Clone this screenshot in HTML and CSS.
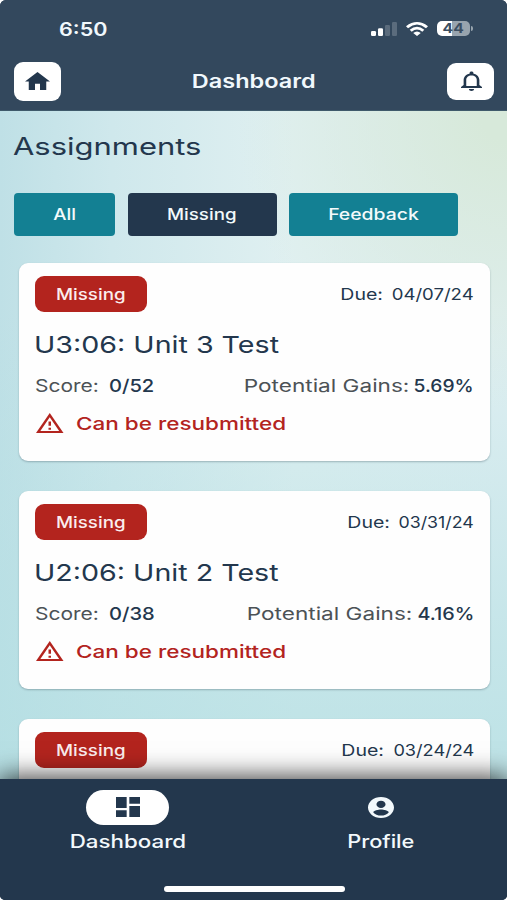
FILE: index.html
```
<!DOCTYPE html>
<html lang="en">
<head>
<meta charset="utf-8">
<meta name="viewport" content="width=device-width, initial-scale=1">
<title>Dashboard</title>
<link rel="stylesheet" href="styles.css">
</head>
<body>
<div class="screen">
  <header class="header">
    <div class="status">
      <span class="t clock">6:50</span>
      <div class="status-icons">
        <svg class="signal" viewBox="0 0 26 14" preserveAspectRatio="none"><rect x="0" y="9" width="5" height="5" rx="1.3"/><rect x="7" y="6.300" width="5" height="7.700" rx="1.300"/><g opacity=".2"><rect x="14" y="3" width="5" height="11" rx="1.300"/><rect x="21" y="0" width="5" height="14" rx="1.300"/></g></svg>
        <svg class="wifi" viewBox="0 0 22 14" preserveAspectRatio="none"><path d="M0 4.200Q11-4.200 22 4.200L20 6.200Q11-1 2 6.200ZM3.700 7.800Q11 1.800 18.300 7.800L16.300 9.800Q11 5.400 5.700 9.800ZM7.200 11.100Q11 8 14.800 11.100L11 14Z"/></svg>
        <div class="battery"><span class="t pct">44</span></div>
      </div>
    </div>
    <div class="titlebar">
      <button class="icon-btn home" aria-label="Home"><svg viewBox="2 3 20 17" preserveAspectRatio="none"><path d="M10 20v-6h4v6h5v-8h3L12 3 2 12h3v8z"/></svg></button>
      <h1 class="t title">Dashboard</h1>
      <button class="icon-btn bell" aria-label="Notifications"><svg viewBox="4 2 16 20" preserveAspectRatio="none"><path d="M12 22c1.100 0 2-.9 2-2h-4c0 1.100.9 2 2 2zm6-6v-5c0-3.070-1.630-5.640-4.500-6.320V4c0-.83-.67-1.500-1.500-1.500s-1.500.67-1.500 1.500v.68C7.640 5.360 6 7.920 6 11v5l-2 2v1h16v-1l-2-2zm-2 1H8v-6c0-2.480 1.510-4.500 4-4.500s4 2.020 4 4.500v6z"/></svg></button>
    </div>
  </header>
  <main class="content">
    <h2 class="heading"><span class="t">Assignments</span></h2>
    <div class="filters">
      <button class="filter all"><span class="t k16">All</span></button>
      <button class="filter missing"><span class="t k16">Missing</span></button>
      <button class="filter feedback"><span class="t k20">Feedback</span></button>
    </div>
    <section class="cards">
      <article class="card">
        <div class="row top"><span class="badge"><span class="t k16">Missing</span></span><div class="due"><span class="t label">Due:</span><span class="t date d1">04/07/24</span></div></div>
        <h3 class="name"><span class="t">U3:06: Unit 3 Test</span></h3>
        <div class="row stats"><div class="score"><span class="t label">Score:</span><span class="t value">0/52</span></div><div class="gains"><span class="t label">Potential Gains:</span><span class="t value g1">5.69%</span></div></div>
        <div class="warn"><svg viewBox="1 2 22 19" preserveAspectRatio="none"><path d="M12 5.990 19.530 19H4.470L12 5.990M12 2 1 21h22L12 2zm1 14h-2v2h2v-2zm0-6h-2v4h2v-4z"/></svg><span class="t">Can be resubmitted</span></div>
      </article>
      <article class="card">
        <div class="row top"><span class="badge"><span class="t k16">Missing</span></span><div class="due"><span class="t label">Due:</span><span class="t date d2">03/31/24</span></div></div>
        <h3 class="name"><span class="t">U2:06: Unit 2 Test</span></h3>
        <div class="row stats"><div class="score"><span class="t label">Score:</span><span class="t value">0/38</span></div><div class="gains"><span class="t label">Potential Gains:</span><span class="t value g2">4.16%</span></div></div>
        <div class="warn"><svg viewBox="1 2 22 19" preserveAspectRatio="none"><path d="M12 5.990 19.530 19H4.470L12 5.990M12 2 1 21h22L12 2zm1 14h-2v2h2v-2zm0-6h-2v4h2v-4z"/></svg><span class="t">Can be resubmitted</span></div>
      </article>
      <article class="card">
        <div class="row top"><span class="badge"><span class="t k16">Missing</span></span><div class="due"><span class="t label">Due:</span><span class="t date d3">03/24/24</span></div></div>
      </article>
    </section>
  </main>
  <nav class="tabs">
    <div class="tab-row">
      <a class="tab active"><span class="pill"><svg class="grid-icon" viewBox="3 3 18 18" preserveAspectRatio="none"><path d="M3 13h8V3H3v10zm0 8h8v-6H3v6zm10 0h8V11h-8v10zm0-18v6h8V3h-8z"/></svg></span><span class="t tab-label">Dashboard</span></a>
      <a class="tab profile"><span class="pill"><svg class="user-icon" viewBox="2 2 20 20" preserveAspectRatio="none"><path d="M12 2C6.480 2 2 6.480 2 12s4.480 10 10 10 10-4.480 10-10S17.520 2 12 2zm0 3.500c1.930 0 3.500 1.570 3.500 3.500S13.930 12.500 12 12.500 8.500 10.930 8.500 9 10.070 5.500 12 5.500zm0 14.200c-2.500 0-4.710-1.280-6-3.220.03-1.600 4-2.680 6-2.680s5.970 1.080 6 2.680c-1.290 1.940-3.500 3.220-6 3.220z"/></svg></span><span class="t tab-label">Profile</span></a>
    </div>
    <div class="home-bar"></div>
  </nav>
</div>
</body>
</html>
```
FILE: styles.css
```
* { box-sizing: border-box; }
body { margin: 0; background: #fff; font-family: Inter, "Liberation Sans", sans-serif; font-weight: 500; color: #23374d; }
h1, h2, h3 { margin: 0; font-weight: 500; }
button { border: 0; padding: 0; font: inherit; color: inherit; }
svg { display: block; fill: currentColor; }

/* Wide lettering: each label is stretched horizontally by --k */
.t { display: inline-block; white-space: nowrap; transform: scaleX(var(--k, 1)); }
.k16 { --k: 1.17; }
.k20 { --k: 1.21; }

.screen { width: 507px; height: 900px; display: flex; flex-direction: column; overflow: hidden; border-radius: 6px 6px 5px 5px; background: #23374d; }

.header { height: 111px; flex: none; background: #33485d; border-bottom: 1px solid #3f5a6b; color: #fff; }
.status { height: 57px; padding: 0 34px 0 59px; display: flex; align-items: center; justify-content: space-between; }
.clock { font-size: 18.5px; font-weight: 600; --k: 1.165; transform-origin: left; color: #f1f8fc; }
.status-icons { display: flex; align-items: center; gap: 9px; }
.signal { width: 26px; height: 14px; }
.wifi { width: 22px; height: 14px; }
.battery { position: relative; width: 33px; height: 15px; margin-right: 3px; border-radius: 5px; background: linear-gradient(90deg, #fff 44%, #98a4ae 44%); color: #3b4e61; display: flex; align-items: center; justify-content: center; }
.battery::after { content: ""; position: absolute; right: -3px; top: 5px; width: 2px; height: 5px; border-radius: 0 2px 2px 0; background: #98a4ae; }
.pct { font-size: 13.5px; font-weight: 700; line-height: 15px; --k: 1.16; }
.titlebar { height: 48px; padding: 0 12.500px 0 13.500px; display: flex; align-items: center; justify-content: space-between; }
.title { font-size: 18.5px; font-weight: 600; --k: 1.27; color: #f1f8fc; }
.icon-btn { display: grid; place-items: center; width: 47.500px; background: #fff; color: #23374d; border-radius: 9px; }
.home { height: 39px; }
.home svg { width: 25px; height: 18px; }
.bell { height: 37px; }
.bell svg { width: 21px; height: 20px; margin-left: 1px; }

.content { height: 668px; flex: none; overflow: hidden; padding: 17px 17.500px 0 13.500px;
  background:
    radial-gradient(ellipse 270px 300px at 100% 0, #d7e9da 10%, #d7e9da00 100%),
    linear-gradient(0deg, #b4dfe3c0 5%, #b4dfe390 25%, #b4dfe300 70%),
    linear-gradient(90deg, #bfe0e6 0%, #cfe8ec 22%, #e0f0f1 58%, #e0eff2 100%); }
.heading { height: 37px; display: flex; align-items: center; font-size: 24px; line-height: 29px; font-weight: 400; }
.heading .t { --k: 1.29; transform-origin: left; margin-left: -1px; }
.filters { display: flex; gap: 12.500px; margin-top: 27.500px; color: #f3fafb; font-size: 16px; }
.filter { height: 43px; border-radius: 4px; background: #138093; }
.all { width: 101.500px; }
.missing { width: 149px; background: #23374d; }
.feedback { width: 169px; }

.cards { display: grid; gap: 30px; margin: 27.500px 0 0 5.500px; }
.card { height: 198px; padding: 13px 15.500px 0 15.500px; border-radius: 9px; background: #fefefe; box-shadow: 0 1px 2px #48606b66; }
.row { display: flex; justify-content: space-between; align-items: center; }
.top { height: 36px; font-size: 16px; }
.badge { width: 112.500px; height: 36px; border-radius: 9px; background: #b3241e; color: #fbeeee; display: grid; place-items: center; }
.due, .gains, .score { display: flex; align-items: center; }
.due { font-weight: 400; }
.due .t, .gains .t { transform-origin: right; }
.due .label { --k: 1.22; }
.d1 { --k: 1.16; margin-left: 20px; }
.d2 { --k: 1.11; margin-left: 16.500px; }
.d3 { --k: 1.135; margin-left: 18.500px; }
.name { height: 30px; margin-top: 17px; display: flex; align-items: center; font-size: 23.500px; font-weight: 400; }
.name .t { --k: 1.218; transform-origin: left; margin-left: -.5px; }
.stats { height: 24px; margin-top: 14px; font-size: 17.500px; }
.stats .label { font-weight: 400; color: #4c5256; }
.score .t { transform-origin: left; }
.score .label { --k: 1.2; }
.score .value { --k: 1.15; margin-left: 21.500px; }
.gains .label { --k: 1.29; }
.g1 { --k: 1.1; margin-left: 10px; }
.g2 { --k: 1.13; margin-left: 11px; }
.warn { height: 24px; margin-top: 14px; padding-left: 1.500px; display: flex; align-items: center; gap: 12.500px; color: #b3241e; font-size: 17.800px; }
.warn svg { width: 27.500px; height: 20px; }
.warn .t { --k: 1.265; transform-origin: left; }

.tabs { position: relative; flex: 1; background: #23374d; color: #fff; box-shadow: 0 0 24px 2px #000000c8; display: flex; flex-direction: column; align-items: center; padding-top: 11px; }
.tab-row { width: 507px; padding-left: 1px; display: grid; grid-template-columns: 1fr 1fr; }
.tab { display: flex; flex-direction: column; align-items: center; gap: 5px; color: #f3f9fc; }
.profile { padding-left: 1px; }
.pill { width: 83px; height: 34.500px; border-radius: 18px; display: grid; place-items: center; }
.active .pill { background: #fff; color: #23374d; }
.grid-icon { width: 24px; height: 20px; }
.user-icon { width: 26px; height: 21px; }
.tab-label { font-size: 18px; line-height: 24px; --k: 1.24; }
.profile .tab-label { --k: 1.21; }
.home-bar { width: 181px; height: 5.500px; border-radius: 3px; background: #fff; margin: 32.500px 0 0 1px; }
```
